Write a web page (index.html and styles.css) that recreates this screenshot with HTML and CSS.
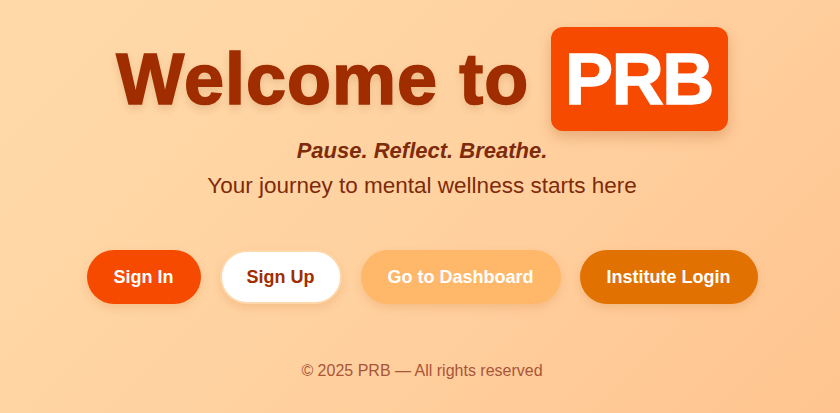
FILE: index.html
```html
<!DOCTYPE html>
<html lang="en">
<head>
<meta charset="utf-8">
<title>PRB</title>
<link rel="stylesheet" href="styles.css">
</head>
<body>
<main class="page">
  <h1 class="title"><span class="welcome">Welcome to</span> <span class="brand">PRB</span></h1>
  <p class="tagline">Pause. Reflect. Breathe.</p>
  <p class="subtitle">Your journey to mental wellness starts here</p>
  <div class="actions">
    <a class="btn btn-primary" href="#">Sign In</a>
    <a class="btn btn-light" href="#">Sign Up</a>
    <a class="btn btn-soft" href="#">Go to Dashboard</a>
    <a class="btn btn-amber" href="#">Institute Login</a>
  </div>
  <footer class="footer">© 2025 PRB — All rights reserved</footer>
</main>
</body>
</html>
```
FILE: styles.css
```css
* { box-sizing: border-box; }
html, body { margin: 0; height: 100%; }
body {
  font-family: "Liberation Sans", Arial, sans-serif;
  background: linear-gradient(135deg, #ffdaa9 0%, #ffd2a0 50%, #ffc490 100%);
  min-height: 413px;
}
.page {
  display: flex;
  flex-direction: column;
  align-items: center;
  padding-top: 27px;
  padding-left: 4px;
}
.title {
  margin: 0;
  font-size: 72px;
  line-height: 72px;
  font-weight: 700;
  color: #9f2d00;
  display: flex;
  align-items: center;
  gap: 22px;
}
.welcome {
  letter-spacing: 1px;
  -webkit-text-stroke: 1.6px #9f2d00;
  text-shadow: 0 4px 8px rgba(120, 50, 0, 0.18);
}
.brand {
  display: inline-block;
  background: #f54a00;
  color: #fff;
  -webkit-text-stroke: 1.4px #fff;
  letter-spacing: -1.5px;
  padding: 16px 15px 16px 14px;
  border-radius: 12px;
  box-shadow: 0 6px 14px rgba(160, 60, 0, 0.25);
}
.tagline {
  margin: 6px 0 0;
  font-size: 22px;
  line-height: 28px;
  font-weight: 700;
  font-style: italic;
  color: #7e2a0c;
}
.subtitle {
  margin: 5px 0 0;
  font-size: 22.5px;
  line-height: 32px;
  color: #7e2a0c;
}
.actions {
  display: flex;
  gap: 19px;
  margin-top: 48px;
}
.btn {
  display: inline-block;
  text-decoration: none;
  font-size: 18px;
  line-height: 26px;
  font-weight: 700;
  padding: 14px 27px;
  border-radius: 27px;
  color: #fff;
  box-shadow: 0 4px 10px rgba(180, 80, 0, 0.15);
}
.btn-primary { background: #f54a00; }
.btn-light {
  background: #fff;
  color: #9f2d00;
  border: 2px solid #fed7aa;
  padding: 12px 25px;
}
.btn-soft { background: #ffb86a; }
.btn-amber { background: #e17100; }
.footer {
  margin-top: 55px;
  font-size: 16px;
  line-height: 24px;
  color: #a8553a;
}
```
